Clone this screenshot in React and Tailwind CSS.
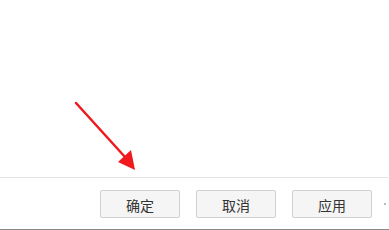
import React from 'react';

export default function App() {
  return (
    <div className="relative w-[389px] h-[230px] bg-white overflow-hidden" style={{ fontFamily: '"Microsoft YaHei", "Noto Sans CJK SC", sans-serif' }}>
      <div className="h-[177px]" />
      <div className="h-px bg-[#e4e4e4] w-[388px]" />
      <div className="flex items-center h-[51px] pl-[100px]">
        <div className="flex gap-4">
          <button className="w-[80px] h-[28px] pt-[2px] bg-[#f5f5f5] border border-[#d0d0d0] rounded-[2px] text-[14px] leading-none text-[#333]">确定</button>
          <button className="w-[80px] h-[28px] pt-[2px] bg-[#f5f5f5] border border-[#d0d0d0] rounded-[2px] text-[14px] leading-none text-[#333]">取消</button>
          <button className="w-[80px] h-[28px] pt-[2px] bg-[#f5f5f5] border border-[#d0d0d0] rounded-[2px] text-[14px] leading-none text-[#333]">应用</button>
        </div>
        <div className="ml-[12px] w-[2px] h-[2px] bg-[#bbb]" />
      </div>
      <div className="h-[1px] bg-[#8a8a8a]" />
      <svg className="absolute left-0 top-0" width="389" height="230">
        <line x1="76" y1="103" x2="125" y2="157" stroke="#f0191e" strokeWidth="2.5" strokeLinecap="round" />
        <polygon points="135,170 118,162 131,150" fill="#f0191e" />
      </svg>
    </div>
  );
}
